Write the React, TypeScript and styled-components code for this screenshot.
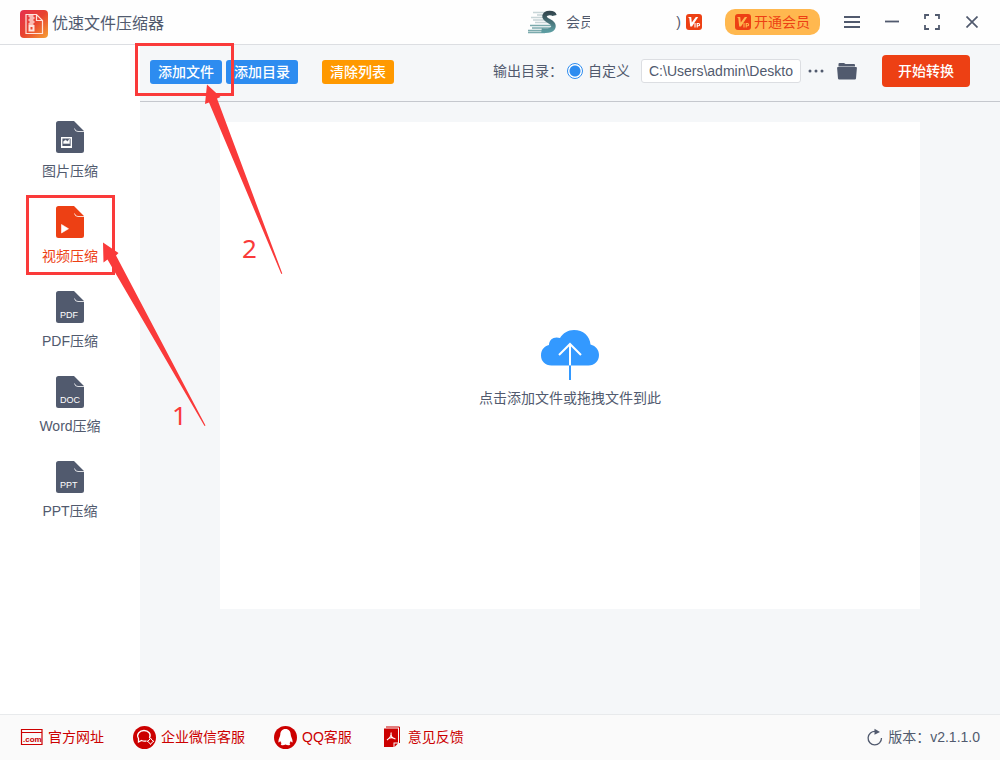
import React, { useState } from 'react';
import styled, { createGlobalStyle } from 'styled-components';

const color = {
  text: '#515a6e',
  blue: '#2d8cf0',
  orange: '#ff9900',
  red: '#ed4014',
  footerRed: '#cc0000',
  line: '#dcdee2',
  panel: '#f5f7f9',
  mark: '#fa3a3a',
};

const GlobalStyle = createGlobalStyle`
  *, *::before, *::after { box-sizing: border-box; }
  body {
    margin: 0;
    background: #fff;
    color: ${color.text};
    font: 14px/20px "Liberation Sans", "Noto Sans CJK SC", sans-serif;
  }
  button, input { font: inherit; color: inherit; }
  button { border: 0; padding: 0; background: none; cursor: pointer; white-space: nowrap; }
  svg { display: block; flex: none; }
`;

const Window = styled.div`
  position: relative;
  min-height: 100vh;
  display: flex;
  flex-direction: column;
`;

const TitleBar = styled.header`
  display: flex;
  align-items: center;
  height: 45px;
  padding: 0 20px;
  border-bottom: 1px solid ${color.line};
  background: #fefefe;
`;

const Brand = styled.h1`
  flex: 1;
  display: flex;
  align-items: center;
  gap: 4px;
  margin: 0;
  padding-top: 3px;
  font-size: 16px;
  font-weight: 400;
  white-space: nowrap;
`;

const Account = styled.div`
  display: flex;
  align-items: center;
  margin-right: 23px;
`;

const MemberName = styled.span`
  width: 24px;
  margin-left: 9px;
  overflow: hidden;
  white-space: nowrap;
`;

const MemberEnd = styled.span`
  width: 91px;
  margin-right: 5px;
  text-align: right;
`;

const VipButton = styled.button`
  display: flex;
  align-items: center;
  gap: 3px;
  height: 26px;
  padding: 0 10px;
  border-radius: 10px;
  background: #ffb84f;
  color: ${color.red};
`;

const WindowControls = styled.div`
  display: flex;
  gap: 20px;
  margin-left: 22px;
  margin-right: -2px;
`;

const IconButton = styled.button`
  display: grid;
  place-items: center;
  width: 20px;
  height: 20px;
`;

const Body = styled.div`
  flex: 1;
  display: flex;
`;

const Sidebar = styled.nav`
  flex: none;
  display: flex;
  flex-direction: column;
  width: 140px;
  padding-top: 66px;
`;

const SideItem = styled.button<{ $active: boolean }>`
  display: flex;
  flex-direction: column;
  align-items: center;
  gap: 8px;
  height: 85px;
  padding-top: 10px;
  color: ${(p) => (p.$active ? color.red : color.text)};
`;

const Main = styled.main`
  flex: 1;
  min-width: 0;
  display: flex;
  flex-direction: column;
  background: ${color.panel};
`;

const Toolbar = styled.div`
  display: flex;
  align-items: center;
  height: 57px;
  padding: 0 30px 4px 10px;
  border-bottom: 1px solid #c5c8ce;
`;

const Tools = styled.div`
  display: flex;
  gap: 24px;
  padding-top: 2px;
`;

const ToolGroup = styled.div`
  display: flex;
  gap: 4px;
`;

const ToolButton = styled.button<{ $tone: string }>`
  height: 24px;
  padding: 0 8px;
  border-radius: 3px;
  background: ${(p) => p.$tone};
  color: #fff;
  font-weight: 500;
`;

const Output = styled.div`
  flex: 1;
  display: flex;
  align-items: center;
  justify-content: flex-end;
  white-space: nowrap;
`;

const RadioLabel = styled.label`
  display: flex;
  align-items: center;
  gap: 5px;
  margin: 0 11px 0 4px;
`;

const Radio = styled.input`
  appearance: none;
  width: 16px;
  height: 16px;
  margin: 0;
  border: 1px solid ${color.blue};
  border-radius: 50%;
  background: #fff;
  &:checked { background: radial-gradient(circle, ${color.blue} 5px, #fff 6px); }
`;

const PathInput = styled.input`
  width: 160px;
  height: 24px;
  padding: 0 7px;
  border: 1px solid ${color.line};
  border-radius: 3px;
  background: #fff;
`;

const PathActions = styled.div`
  display: flex;
  gap: 11px;
  margin: 0 25px 0 5px;
`;

const StartButton = styled.button`
  height: 32px;
  padding: 0 16px;
  border-radius: 4px;
  background: ${color.red};
  color: #fff;
  font-weight: 500;
`;

const DropWrap = styled.div`
  flex: 1;
  display: flex;
  padding: 20px 80px 105px;
`;

const DropZone = styled.button`
  flex: 1;
  display: flex;
  flex-direction: column;
  align-items: center;
  justify-content: center;
  gap: 8px;
  padding-top: 6px;
  background: #fff;
`;

const Footer = styled.footer`
  display: flex;
  align-items: center;
  gap: 29px;
  height: 46px;
  padding: 0 20px 1px;
  border-top: 1px solid #e8eaec;
  background: #fafafa;
`;

const FooterLink = styled.a`
  display: flex;
  align-items: center;
  gap: 5px;
  color: ${color.footerRed};
  text-decoration: none;
  white-space: nowrap;
`;

const Version = styled.span`
  display: flex;
  align-items: center;
  gap: 5px;
  margin-left: auto;
  white-space: nowrap;
`;

const Markup = styled.svg`
  position: absolute;
  top: 0;
  left: 0;
  pointer-events: none;
`;

const Logo = () => (
  <svg width="28" height="28" viewBox="0 0 28 28" aria-hidden="true">
    <defs>
      <linearGradient id="logo" x1="0" y1="0" x2="1" y2="1">
        <stop offset="0" stopColor="#e5304f" />
        <stop offset=".5" stopColor="#e8432f" />
        <stop offset="1" stopColor="#f7a234" />
      </linearGradient>
    </defs>
    <rect width="28" height="28" rx="4" fill="url(#logo)" />
    <g fill="none" stroke="#ffe3dc" strokeWidth="1.200">
      <path d="M16.500 4.500H6v19h16.500v-13zM16.500 4.500v6h6" />
      <path d="M8.500 6h5M9.500 8h5M8.500 10h5M9.500 12h5M8.500 14h5" strokeWidth="1.300" />
      <path d="M9.500 16h4v4.500h-4z" strokeWidth="2" />
    </g>
  </svg>
);

const Avatar = () => (
  <svg width="29" height="28" viewBox="0 0 29 28" aria-hidden="true">
    <defs>
      <linearGradient id="avatar" x1="0" y1="0" x2="0" y2="1">
        <stop offset="0" stopColor="#344850" />
        <stop offset="1" stopColor="#5b9ba0" />
      </linearGradient>
    </defs>
    <g fill="none" stroke="#8fabb0" strokeWidth="1.500">
      <path d="M5 4.500h13M9 7h8M3 9.500h13M5 12h12M7 14.500h14" opacity=".5" />
      <path d="M2 17.500h22M4 20h20M0 22.500h21M0 24.500h17" stroke="#4f8d91" opacity=".75" />
    </g>
    <path
      d="M26.500 7.500C25.500 4 17.500 4 16.500 8c-.5 5 9 5 9 10 0 4-5 5.500-12 4.500"
      fill="none" stroke="url(#avatar)" strokeWidth="4.500"
    />
  </svg>
);

const VipIcon = ({ ink }: { ink: string }) => (
  <svg width="16" height="16" viewBox="0 0 16 16" aria-hidden="true">
    <rect width="16" height="16" rx="3" fill={color.red} />
    <path d="M2 3h3.200l.6 5.500L9.800 3h2.400L6 12.500H4.200L3.300 4.200z" fill={ink} />
    <path d="M9 9v4.500M11.200 13.500v-4h1.300a1.100 1.100 0 010 2.300h-1.300" fill="none" stroke={ink} strokeWidth="1.100" />
  </svg>
);

const FilePath = ({ children }: { children: React.ReactNode }) => (
  <svg width="28" height="32" viewBox="0 0 28 32" aria-hidden="true">
    <path d="M2.500 0H18l10 10v19.500a2.500 2.500 0 01-2.500 2.500h-23A2.500 2.500 0 010 29.500v-27A2.500 2.500 0 012.500 0z" fill="currentColor" />
    <path d="M18.500 7.500q.5 3 3.500 3h6" fill="none" stroke="#fff" strokeWidth=".8" />
    {children}
  </svg>
);

const FileWord = ({ word }: { word: string }) => (
  <text x="4" y="27" fill="#fff" fontFamily="'Liberation Sans', sans-serif" fontSize="9">{word}</text>
);

const CloudIcon = () => (
  <svg width="58" height="50" viewBox="0 0 58 50" aria-hidden="true">
    <path d="M10.500 35.500C4 35.500 0 31 0 25.500 0 19.500 3.500 16 8 15 8 9.500 13 6 19 8 22 3 27 0 33 0c9 0 16 6 16.500 14.500C55 16 58 20 58 25c0 6-4.500 10.500-10.500 10.500z" fill="#3399ff" />
    <path d="M29 35.500V14M18 25l11-11 11 11" fill="none" stroke="#fff" strokeWidth="2" />
    <path d="M29 35.500V50" stroke="#3399ff" strokeWidth="2" />
  </svg>
);

const MenuIcon = () => (
  <svg width="16" height="12" viewBox="0 0 16 12" fill="none" stroke={color.text} strokeWidth="1.800">
    <path d="M0 1h16M0 6h16M0 11h16" />
  </svg>
);
const MinusIcon = () => (
  <svg width="14" height="12" viewBox="0 0 14 12"><path d="M0 5.500h14" stroke={color.text} strokeWidth="1.800" /></svg>
);
const ExpandIcon = () => (
  <svg width="16" height="16" viewBox="0 0 16 16" fill="none" stroke={color.text} strokeWidth="1.800">
    <path d="M1 5V1h4M11 1h4v4M15 11v4h-4M5 15H1v-4" />
  </svg>
);
const CloseIcon = () => (
  <svg width="12" height="12" viewBox="0 0 12 12"><path d="M.5.500l11 11M11.500.500l-11 11" stroke={color.text} strokeWidth="1.700" /></svg>
);
const DotsIcon = () => (
  <svg width="16" height="4" viewBox="0 0 16 4" fill={color.text}>
    <circle cx="2" cy="2" r="1.500" /><circle cx="8" cy="2" r="1.500" /><circle cx="14" cy="2" r="1.500" />
  </svg>
);
const FolderIcon = () => (
  <svg width="20" height="18" viewBox="0 0 20 18" fill={color.text}>
    <path d="M1.500 4.500V2Q1.500 1 2.500 1h4.500l1.500 1h8.500q1 0 1 1v1.500z" />
    <path d="M1 5h18q1 0 .9 1l-.9 10.500q-.1 1-1.200 1H2.200q-1.100 0-1.200-1L.1 6Q0 5 1 5z" />
  </svg>
);

const ComIcon = () => (
  <svg width="23" height="18" viewBox="0 0 23 18" aria-hidden="true">
    <path d="M1.500 1.500h20.500v15H1.500zM1.500 4.500h20.500" fill="none" stroke={color.footerRed} strokeWidth="1.200" />
    <text x="3" y="14" fontSize="8" fontWeight="700" fontFamily="'Liberation Sans Narrow', 'Liberation Sans', sans-serif" fill={color.footerRed}>.com</text>
  </svg>
);
const ChatIcon = () => (
  <svg width="23" height="23" viewBox="0 0 23 23" aria-hidden="true">
    <circle cx="11.500" cy="11.500" r="11.500" fill={color.footerRed} />
    <g fill="none" stroke="#fff" strokeWidth="1.300">
      <path d="M16.500 12c2-4-1-7.500-5.500-7.500s-8 4-5.500 8L5.500 16l3-1.500q2.500 1 5 .3" />
      <path d="M17.500 12l1.300 2 2 1.300-2 1.200-1.300 2-1.300-2-2-1.200 2-1.300z" strokeWidth="1" />
    </g>
  </svg>
);
const PenguinIcon = () => (
  <svg width="23" height="23" viewBox="0 0 23 23" aria-hidden="true">
    <circle cx="11.500" cy="11.500" r="11.500" fill={color.footerRed} />
    <path d="M11.500 3C8 3 6.300 5.500 6.300 8.500c0 2-1.900 4-1.900 7 0 1.500 1 1 1.800-.5.300 1 .7 1.700 1.400 2.300-1.200.6-1.200 1.700.3 1.900 1.500.2 2.800-.2 3.600-.8.800.6 2.100 1 3.600.8 1.500-.2 1.500-1.300.3-1.900.7-.6 1.100-1.300 1.400-2.300.8 1.500 1.800 2 1.800.5 0-3-1.900-5-1.900-7 0-3-1.700-5.500-5.200-5.500z" fill="#fff" />
  </svg>
);
const FeedbackIcon = () => (
  <svg width="22" height="22" viewBox="0 0 22 22" aria-hidden="true">
    <path d="M5 1h13.500v16" fill="none" stroke={color.footerRed} />
    <path d="M3 2.500h14V16.500h-4.500V21H3z" fill={color.footerRed} />
    <path d="M13.500 17.500H17L13.500 21z" fill={color.footerRed} />
    <path d="M10 6.500q1 4-4 7.500M10 8q0 4 4.500 5M7.500 12.500q3-1.500 6 0" fill="none" stroke="#fff" strokeWidth="1.100" />
  </svg>
);
const RefreshIcon = () => (
  <svg width="16" height="18" viewBox="0 0 16 18" aria-hidden="true">
    <path d="M8.500 3.500A6.700 6.700 0 1014.500 10" fill="none" stroke={color.text} strokeWidth="1.300" />
    <path d="M7.500.8L13 4 7.500 6.800z" fill={color.text} />
  </svg>
);

const tasks = [
  {
    label: '图片压缩',
    art: (
      <g fill="none" stroke="#fff">
        <path d="M5.700 16.700h9.600v9H5.700z" strokeWidth="1.400" />
        <path d="M5 26h11" strokeWidth="2" />
        <path d="M7.500 22.500v-2l2-1.500 2 1.500 2-2.500v4.500z" fill="#fff" strokeWidth=".4" />
      </g>
    ),
  },
  { label: '视频压缩', art: <path d="M5.500 18.500v8.500l7-4.250z" fill="#fff" stroke="#fff" strokeWidth=".6" strokeLinejoin="round" /> },
  { label: 'PDF压缩', art: <FileWord word="PDF" /> },
  { label: 'Word压缩', art: <FileWord word="DOC" /> },
  { label: 'PPT压缩', art: <FileWord word="PPT" /> },
];

const Annotations = () => (
  <Markup width="290" height="440" viewBox="0 0 290 440" fill={color.mark} aria-hidden="true">
    <g fill="none" stroke={color.mark} strokeWidth="3">
      <rect x="27.500" y="196.500" width="86" height="77" />
      <rect x="136.500" y="44.500" width="96" height="50" />
    </g>
    <path d="M103 242.500l15.500 10.500-2.500 2.500L205.500 425.500l-1 .5L107.500 259.500l-4 3z" />
    <path d="M207 84.500l13.500 12.500-3.500 1.500L282.300 273.500l-1 .5L209 102.500l-4 1.500z" />
    <g fontFamily="'Noto Sans', sans-serif" fontSize="26">
      <text x="172" y="425">1</text>
      <text x="242" y="258">2</text>
    </g>
  </Markup>
);

export default function App() {
  const [active, setActive] = useState(1);
  const [path, setPath] = useState('C:\\Users\\admin\\Deskto');

  return (
    <>
      <GlobalStyle />
      <Window>
        <TitleBar>
          <Brand><Logo />优速文件压缩器</Brand>
          <Account>
            <Avatar />
            <MemberName>会员</MemberName>
            <MemberEnd>)</MemberEnd>
            <VipIcon ink="#fff" />
          </Account>
          <VipButton><VipIcon ink="#ffb84f" />开通会员</VipButton>
          <WindowControls>
            <IconButton aria-label="菜单"><MenuIcon /></IconButton>
            <IconButton aria-label="最小化"><MinusIcon /></IconButton>
            <IconButton aria-label="最大化"><ExpandIcon /></IconButton>
            <IconButton aria-label="关闭"><CloseIcon /></IconButton>
          </WindowControls>
        </TitleBar>

        <Body>
          <Sidebar>
            {tasks.map((task, i) => (
              <SideItem key={task.label} $active={i === active} onClick={() => setActive(i)}>
                <FilePath>{task.art}</FilePath>
                {task.label}
              </SideItem>
            ))}
          </Sidebar>

          <Main>
            <Toolbar>
              <Tools>
                <ToolGroup>
                  <ToolButton $tone={color.blue}>添加文件</ToolButton>
                  <ToolButton $tone={color.blue}>添加目录</ToolButton>
                </ToolGroup>
                <ToolButton $tone={color.orange}>清除列表</ToolButton>
              </Tools>
              <Output>
                <span>输出目录：</span>
                <RadioLabel>
                  <Radio type="radio" name="output" defaultChecked />
                  自定义
                </RadioLabel>
                <PathInput aria-label="输出目录" value={path} onChange={(e) => setPath(e.target.value)} />
                <PathActions>
                  <IconButton aria-label="更多"><DotsIcon /></IconButton>
                  <IconButton aria-label="打开目录"><FolderIcon /></IconButton>
                </PathActions>
                <StartButton>开始转换</StartButton>
              </Output>
            </Toolbar>
            <DropWrap>
              <DropZone>
                <CloudIcon />
                点击添加文件或拖拽文件到此
              </DropZone>
            </DropWrap>
          </Main>
        </Body>

        <Footer>
          <FooterLink href="#site"><ComIcon />官方网址</FooterLink>
          <FooterLink href="#wechat"><ChatIcon />企业微信客服</FooterLink>
          <FooterLink href="#qq"><PenguinIcon />QQ客服</FooterLink>
          <FooterLink href="#feedback"><FeedbackIcon />意见反馈</FooterLink>
          <Version><RefreshIcon />版本：v2.1.1.0</Version>
        </Footer>
        <Annotations />
      </Window>
    </>
  );
}
